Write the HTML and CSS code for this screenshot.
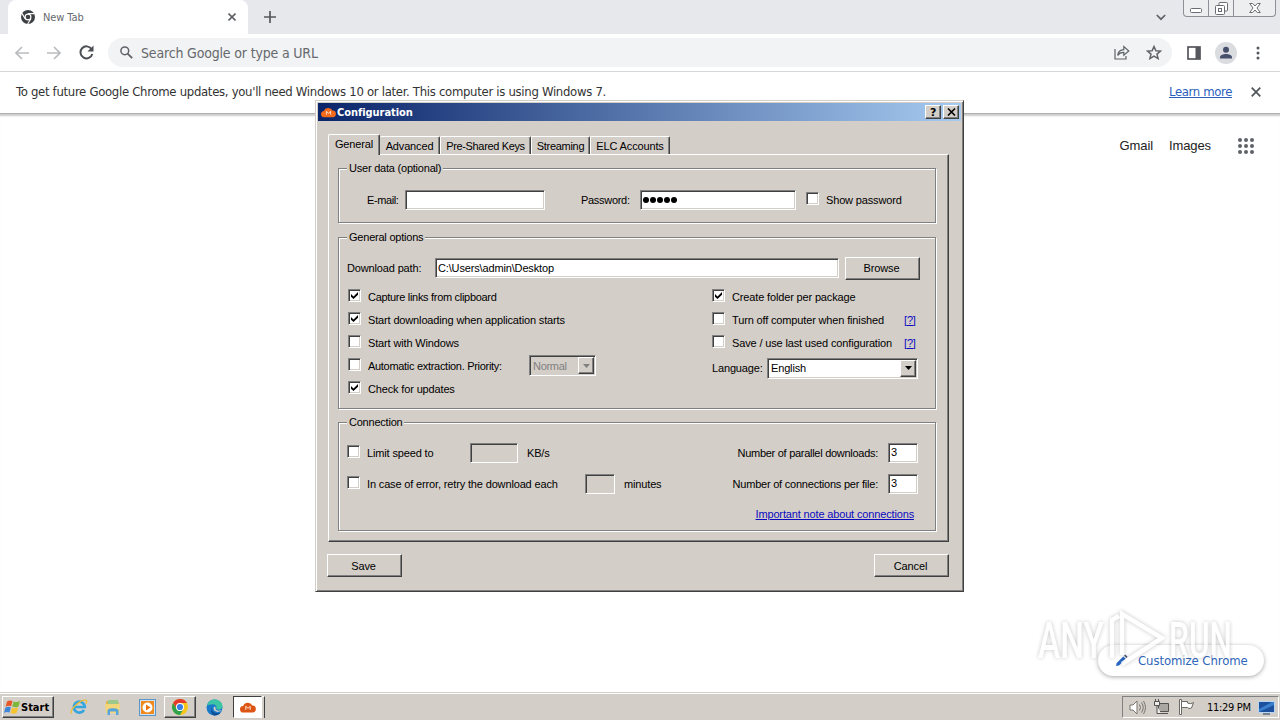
FILE: index.html
```html
<!DOCTYPE html>
<html lang="en">
<head>
    <meta charset="UTF-8">
    <meta name="viewport" content="width=device-width, initial-scale=1.0">
    <title>New Tab</title>
    <link rel="stylesheet" href="styles.css">
</head>
<body>
    <div class="desktop">
        <div class="tabstrip">
            <div class="tab">
                <svg class="tab-icon" width="14" height="14" viewBox="0 0 14 14"><circle cx="7" cy="7" r="7" fill="#3c4043"/><circle cx="7" cy="7" r="2.9" fill="none" stroke="#fff" stroke-width="1.2"/><path d="M7 3.6h6.5M4.1 8.7L1 3.4M9.9 8.7L6.6 14" stroke="#fff" stroke-width="1.1"/></svg>
                <span class="tab-title">New Tab</span>
                <svg width="8" height="8" viewBox="0 0 8 8"><path d="M.5.5l7 7M7.5.5l-7 7" stroke="#5f6368" stroke-width="1.6"/></svg>
            </div>
            <svg class="new-tab" width="12" height="12" viewBox="0 0 12 12"><path d="M6 0v12M0 6h12" stroke="#55585c" stroke-width="1.7"/></svg>
            <svg class="tab-search" width="10" height="7" viewBox="0 0 10 7"><path d="M.8 1L5 5.2 9.2 1" fill="none" stroke="#5f6368" stroke-width="1.7"/></svg>
            <div class="win-controls">
                <span><svg width="12" height="5" viewBox="0 0 12 5"><rect x=".5" y=".5" width="11" height="4" rx="1" fill="#fff" stroke="#6a6d73"/></svg></span>
                <span><svg width="13" height="13" viewBox="0 0 13 13"><g fill="#fff" stroke="#6a6d73"><rect x="4" y=".5" width="8.5" height="8.5" rx="1"/><rect x=".5" y="3.5" width="9" height="9" rx="1"/><rect x="3.5" y="6.5" width="3" height="3"/></g></svg></span>
                <span class="wide"><svg width="12" height="10" viewBox="0 0 12 10"><path d="M.7.5h3L6 3 8.300.5h3L8 5l3.300 4.500h-3L6 7 3.700 9.500h-3L4 5z" fill="#fff" stroke="#6a6d73"/></svg></span>
            </div>
        </div>

        <div class="toolbar">
            <svg width="14" height="14" viewBox="0 0 14 14"><path d="M14 7H1.500M7 1L1 7l6 6" fill="none" stroke="#babcbe" stroke-width="1.700"/></svg>
            <svg class="forward" width="14" height="14" viewBox="0 0 14 14"><path d="M0 7h12.500M7 1l6 6-6 6" fill="none" stroke="#babcbe" stroke-width="1.700"/></svg>
            <svg class="reload" width="15" height="15" viewBox="0 0 15 15"><path d="M12.500 4A6 6 0 1 0 13.300 9" fill="none" stroke="#4c4f53" stroke-width="2"/><path d="M14.500.5v6h-6z" fill="#4c4f53"/></svg>
            <div class="omnibox">
                <svg width="13" height="13" viewBox="0 0 13 13"><circle cx="4.800" cy="4.800" r="3.900" fill="none" stroke="#5f6368" stroke-width="1.500"/><path d="M7.600 7.600l4.600 4.600" stroke="#5f6368" stroke-width="1.800"/></svg>
                <span class="omnibox-text">Search Google or type a URL</span>
                <svg class="share" width="16" height="15" viewBox="0 0 16 15"><path d="M1 4v10h11v-3" fill="none" stroke="#5f6368" stroke-width="1.200"/><path d="M3.700 10.500C4 6.800 6.500 4.800 9.800 4.600V1.500l5 4.500-5 4.300V7.400C7 7.300 5 8.400 3.700 10.500z" fill="none" stroke="#5f6368" stroke-width="1.200"/></svg>
                <svg width="16" height="15" viewBox="0 0 16 15"><path d="M8 1.500l1.900 4.200 4.600.4-3.500 3 1.100 4.500L8 11.200l-4.100 2.400L5 9.100l-3.500-3 4.600-.4z" fill="none" stroke="#5f6368" stroke-width="1.500"/></svg>
            </div>
            <svg class="side-panel" width="14" height="14" viewBox="0 0 14 14"><rect x="1" y="1" width="12" height="12" fill="#fff" stroke="#55575d" stroke-width="1.700"/><path d="M8.500 1H13v12H8.500z" fill="#55575d"/></svg>
            <svg class="avatar" width="22" height="22" viewBox="0 0 22 22"><circle cx="11" cy="11" r="11" fill="#dadce0"/><circle cx="11" cy="7.800" r="3" fill="#46506c"/><path d="M5 16.500v-1.300c0-2.200 3.500-3.200 6-3.200s6 1 6 3.200v1.300z" fill="#46506c"/></svg>
            <svg width="4" height="14" viewBox="0 0 4 14" fill="#55585c"><circle cx="2" cy="2" r="1.500"/><circle cx="2" cy="7" r="1.500"/><circle cx="2" cy="12" r="1.500"/></svg>
        </div>

        <div class="infobar">
            <span class="infobar-text">To get future Google Chrome updates, you'll need Windows 10 or later. This computer is using Windows 7.</span>
            <a class="learn-more">Learn more</a>
            <svg width="10" height="10" viewBox="0 0 10 10"><path d="M.7.7l8.600 8.600M9.300.7L.7 9.300" stroke="#55585c" stroke-width="1.800"/></svg>
        </div>

        <div class="page">
            <div class="page-links">
                <span class="gmail">Gmail</span>
                <span class="images">Images</span>
                <svg width="16" height="16" viewBox="0 0 16 16" fill="#5f6368"><circle cx="2" cy="2" r="2"/><circle cx="8" cy="2" r="2"/><circle cx="14" cy="2" r="2"/><circle cx="2" cy="8" r="2"/><circle cx="8" cy="8" r="2"/><circle cx="14" cy="8" r="2"/><circle cx="2" cy="14" r="2"/><circle cx="8" cy="14" r="2"/><circle cx="14" cy="14" r="2"/></svg>
            </div>
        </div>

        <div class="taskbar">
            <div class="start">
                <svg width="17" height="16" viewBox="0 0 17 16"><path d="M3 2.500C5 1 7 1.200 8.500 2L7.200 7.200C5.500 6.400 3.500 6.500 1.600 7.700z" fill="#e8572a"/><path d="M9.500 2.400c2 .9 4 .9 6.500-.4l-1.500 5.400c-2.300 1.200-4.300 1-6.200.2z" fill="#7db83a"/><path d="M1.300 8.700c2-1.200 4-1.200 5.600-.4l-1.400 5.200c-1.700-.8-3.600-.7-5.500.4z" fill="#3f86d8"/><path d="M8 8.700c2 .8 4 .8 6.200-.2l-1.500 5.300c-2.300 1.200-4.300 1-6.100.1z" fill="#f7c331"/></svg>
                <span>Start</span>
            </div>
            <div class="quick">
                <svg width="18" height="18" viewBox="0 0 18 18"><path d="M14 12a5.500 5.500 0 1 1 .8-3H5" fill="none" stroke="#35a5e0" stroke-width="2.700"/><path d="M1.500 15.500C-1 12 11 .5 16.200 2.300c1 .7.5 2-.4 3.500" fill="none" stroke="#edbd35" stroke-width="1.300"/></svg>
            </div>
            <div class="quick">
                <svg width="18" height="17" viewBox="0 0 18 17"><path d="M2 2h5l1.500 1.500H15V13H2z" fill="#dcb450"/><path d="M4 1h10v5H4z" fill="#9cc98a"/><path d="M1 5h15l-1 9H2z" fill="#f3d67a"/><path d="M3.500 16v-4.500c0-3 11-3 11 0V16H12v-3.500H6V16z" fill="#58a5dc"/></svg>
            </div>
            <div class="quick">
                <svg width="17" height="17" viewBox="0 0 17 17"><rect x=".5" y=".5" width="16" height="16" fill="#cfe4f7" stroke="#5c94cc"/><rect x="2" y="2" width="13" height="13" fill="#f08a1c"/><circle cx="8.500" cy="8.500" r="5" fill="#fff"/><path d="M7 5.500l4.500 3L7 11.500z" fill="#e9720c"/></svg>
            </div>
            <div class="task raised">
                <svg width="16" height="16" viewBox="0 0 16 16"><circle cx="8" cy="8" r="8" fill="#f7c61c"/><path d="M1.070 4A8 8 0 0 1 14.930 4H8a4 4 0 0 0-3.460 6z" fill="#e33b2e"/><path d="M1.070 4A8 8 0 0 0 8 16l3.460-6A4 4 0 0 1 4.540 10z" fill="#2fa24c"/><circle cx="8" cy="8" r="4" fill="#fff"/><circle cx="8" cy="8" r="3.100" fill="#3b7de8"/></svg>
            </div>
            <div class="quick edge">
                <svg width="17" height="17" viewBox="0 0 17 17"><circle cx="8.500" cy="8.500" r="8" fill="#1b79c9"/><path d="M1 7C2 2 6 .5 9 .5c5 0 7.700 4 7.500 7-.2 3-4.500 4-6.500 2.300 1.500-2-.5-4.500-3-4.500C4 5.300 2 6 1 7z" fill="#3cc5a5"/><path d="M5.500 9c0 4 4 6.200 9 4.800-1.500 2-4 3-6.500 2.700C5 15 4.500 11 5.500 9z" fill="#0c4f94"/><path d="M8.300 7.500c1.500.5 1.500 1.600 1.200 2.500.7 2 4 2 6.200 1-1 2-6 2.700-7.700 0-.6-1.300-.5-2.500.3-3.500z" fill="#d4d0c8"/></svg>
            </div>
            <div class="task sunken">
                <svg width="16" height="12" viewBox="0 0 16 12"><path d="M3.500 11.500a3.300 3.300 0 0 1-.4-6.600A5 5 0 0 1 12.300 4.500a3.500 3.500 0 0 1 .2 7z" fill="#dd5514"/><path d="M5.800 8.800V5.300L8 7.300l2.200-2v3.500" fill="none" stroke="#ffe3d0" stroke-width="1"/></svg>
            </div>
            <div class="task-stub"></div>
            <div class="tray">
                <svg width="17" height="15" viewBox="0 0 17 15"><path d="M1 5h3l4-4v13l-4-4H1z" fill="#fff" stroke="#77746f"/><path d="M10.500 4.500q2 3 0 6M12.500 2.500q3.500 5 0 10M14.500 1q4 6.500 0 13" fill="none" stroke="#77746f"/></svg>
                <svg width="17" height="16" viewBox="0 0 17 16"><path d="M5.500 4.500h10v8h-10z" fill="#aaa7a2" stroke="#55534f"/><path d="M7 14.500h8" stroke="#55534f"/><path d="M1.500 2.500h5v4h-5zM2.500 0v2M5.500 0v2M4 6.500v8h4" fill="#eee" stroke="#55534f"/></svg>
                <svg width="17" height="16" viewBox="0 0 17 16"><path d="M1.500.5h2v15h-2z" fill="#fff" stroke="#6b6863"/><path d="M3.500 2.500h6v1.500c2 1 4 .8 6-.5l-2 5.500c-2 .8-3.500.5-4-.5h-6z" fill="#fff" stroke="#6b6863"/></svg>
                <span class="clock">11:29 PM</span>
                <svg width="17" height="15" viewBox="0 0 17 15"><rect x=".5" y="1.500" width="16" height="11" fill="#1c4f9c" stroke="#b9d6f2"/><path d="M1 9L14 2h2v3L1 12z" fill="#3a7fce"/><path d="M5 14h7" stroke="#1b3558"/></svg>
            </div>
        </div>

        <div class="customize">
            <svg width="13" height="13" viewBox="0 0 13 13"><path d="M1 12l.7-3L8.300 2.400l2.400 2.400L4 11.400z" fill="#2867c5"/><path d="M9 1.700L10.300.5l2.300 2.300-1.200 1.300z" fill="#4a5a78"/></svg>
            <span>Customize Chrome</span>
        </div>

        <svg class="watermark" width="230" height="80" viewBox="0 0 230 80">
            <g class="watermark-shape">
                <text x="8" y="53" textLength="66" lengthAdjust="spacingAndGlyphs">ANY</text>
                <text x="139" y="53" textLength="63" lengthAdjust="spacingAndGlyphs">RUN</text>
                <path d="M82 53V15l7-4M92 50V9l40 24-40 26" fill="none" stroke="#fff" stroke-width="4.500"/>
            </g>
        </svg>

        <div class="dialog">
            <div class="titlebar">
                <svg width="15" height="12" viewBox="0 0 16 12"><path d="M3.500 11.500a3.300 3.300 0 0 1-.4-6.600A5 5 0 0 1 12.300 4.500a3.500 3.500 0 0 1 .2 7z" fill="#f26a1b"/><path d="M5.800 8.800V5.300L8 7.300l2.200-2v3.500" fill="none" stroke="#ffe3d0" stroke-width="1"/></svg>
                <span class="title">Configuration</span>
                <span class="title-btn">?</span>
                <span class="title-btn"><svg width="9" height="8" viewBox="0 0 9 8"><path d="M1 .5l7 7M8 .5l-7 7" stroke="#000" stroke-width="1.600"/></svg></span>
            </div>

            <div class="tabs">
                <span class="dlg-tab active">General</span>
                <span class="dlg-tab advanced">Advanced</span>
                <span class="dlg-tab keys">Pre-Shared Keys</span>
                <span class="dlg-tab streaming">Streaming</span>
                <span class="dlg-tab accounts">ELC Accounts</span>
            </div>

            <div class="panel">
                <div class="group user-data">
                    <span class="legend">User data (optional)</span>
                    <div class="user-row">
                        <span class="email-label">E-mail:</span>
                        <span class="field email"></span>
                        <span class="password-label">Password:</span>
                        <span class="field password"><i></i><i></i><i></i><i></i><i></i></span>
                        <span class="check"><span class="box"></span>Show password</span>
                    </div>
                </div>

                <div class="group general">
                    <span class="legend">General options</span>
                    <div class="path-row">
                        <span class="path-label">Download path:</span>
                        <span class="field path">C:\Users\admin\Desktop</span>
                        <span class="button">Browse</span>
                    </div>
                    <div class="columns">
                        <div class="col-left">
                            <div class="check tight"><span class="box"><svg width="7" height="7" viewBox="0 0 7 7"><path d="M0 2l2.500 2.500L7 0v2.700L2.500 7 0 4.700z"/></svg></span>Capture links from clipboard</div>
                            <div class="check"><span class="box"><svg width="7" height="7" viewBox="0 0 7 7"><path d="M0 2l2.500 2.500L7 0v2.700L2.500 7 0 4.700z"/></svg></span>Start downloading when application starts</div>
                            <div class="check"><span class="box"></span>Start with Windows</div>
                            <div class="check tight"><span class="box"></span><span class="extract-label">Automatic extraction. Priority:</span><span class="select disabled">Normal<b><svg width="7" height="4" viewBox="0 0 7 4"><path d="M0 0h7L3.500 4z"/></svg></b></span></div>
                            <div class="check"><span class="box"><svg width="7" height="7" viewBox="0 0 7 7"><path d="M0 2l2.500 2.500L7 0v2.700L2.500 7 0 4.700z"/></svg></span>Check for updates</div>
                        </div>
                        <div class="col-right">
                            <div class="check"><span class="box"><svg width="7" height="7" viewBox="0 0 7 7"><path d="M0 2l2.500 2.500L7 0v2.700L2.500 7 0 4.700z"/></svg></span>Create folder per package</div>
                            <div class="check"><span class="box"></span><span class="help-label">Turn off computer when finished</span><a class="link">[?]</a></div>
                            <div class="check"><span class="box"></span><span class="help-label">Save / use last used configuration</span><a class="link">[?]</a></div>
                            <div class="language-row"><span class="language-label">Language:</span><span class="select">English<b><svg width="7" height="4" viewBox="0 0 7 4"><path d="M0 0h7L3.500 4z"/></svg></b></span></div>
                        </div>
                    </div>
                </div>

                <div class="group connection">
                    <span class="legend">Connection</span>
                    <div class="conn-row">
                        <span class="check limit"><span class="box"></span>Limit speed to</span>
                        <span class="field disabled speed"></span>
                        <span class="unit">KB/s</span>
                        <span class="number-label parallel">Number of parallel downloads:</span>
                        <span class="field number">3</span>
                    </div>
                    <div class="conn-row">
                        <span class="check retry"><span class="box"></span>In case of error, retry the download each</span>
                        <span class="field disabled minutes"></span>
                        <span class="unit">minutes</span>
                        <span class="number-label">Number of connections per file:</span>
                        <span class="field number">3</span>
                    </div>
                    <div class="note-row"><a class="link">Important note about connections</a></div>
                </div>
            </div>

            <div class="actions">
                <span class="button">Save</span>
                <span class="button">Cancel</span>
            </div>
        </div>
    </div>
</body>
</html>
```
FILE: styles.css
```css
* { box-sizing: border-box; }
body { margin: 0; overflow: hidden; font-family: "Liberation Sans", sans-serif; color: #000; }
svg { flex: none; display: block; }
span { white-space: nowrap; }
.desktop { position: relative; width: 1280px; height: 720px; display: flex; flex-direction: column; background: #fff; overflow: hidden; }

/* browser */
.tabstrip { height: 34px; flex: none; display: flex; align-items: center; background: #e6e8eb; padding: 0 4px 0 8px; }
.tab { width: 240px; height: 34px; display: flex; align-items: center; background: #fff; border-radius: 8px 8px 0 0; padding: 0 12px 0 13px; box-shadow: 0 8px 0 #fff; }
.tab-icon { margin-right: 8px; }
.tab-title { flex: 1; font: 11px "DejaVu Sans Condensed", "DejaVu Sans", sans-serif; font-stretch: condensed; letter-spacing: -0.1px; color: #66696d; }
.new-tab { margin-left: 16px; }
.tab-search { margin-left: auto; margin-right: 17px; }
.win-controls { align-self: flex-start; width: 93px; height: 17px; display: flex; border: 1px solid #8d9096; border-top: 0; border-radius: 0 0 4px 4px; background: #eceef0; }
.win-controls span { width: 25px; display: flex; align-items: center; justify-content: center; border-right: 1px solid #8d9096; }
.win-controls span:first-child { padding-top: 4px; }
.win-controls .wide { flex: 1; border-right: 0; }
.toolbar { height: 38px; flex: none; display: flex; align-items: center; padding: 0 20px 0 15px; border-bottom: 1px solid #d5d7da; background: #fff; }
.forward { margin-left: 18px; }
.reload { margin-left: 18px; }
.omnibox { width: 1064px; height: 29px; margin-left: 14px; border-radius: 15px; background: #f1f3f4; display: flex; align-items: center; padding: 0 10px 0 12px; }
.omnibox-text { flex: 1; margin-left: 8px; font: 14px "DejaVu Sans Condensed", "DejaVu Sans", sans-serif; font-stretch: condensed; letter-spacing: -0.17px; color: #66696d; }
.share { margin-right: 16px; }
.side-panel { margin-left: 15px; }
.avatar { margin: 0 auto 0 14px; }
.infobar { height: 41px; flex: none; display: flex; align-items: center; padding: 0 19px 1px 16px; font: 13px "DejaVu Sans Condensed", "DejaVu Sans", sans-serif; font-stretch: condensed; letter-spacing: -0.305px; color: #333; background: #fff; }
.infobar-text { flex: 1; padding-bottom: 2px; }
.learn-more { color: #2a5fc0; text-decoration: underline; margin-right: 19px; padding-bottom: 2px; letter-spacing: -0.36px; }
.page { flex: 1; border-top: 1px solid #b0b0b0; box-shadow: inset 0 3px 2px -1px #ccc; }
.page-links { height: 64px; display: flex; align-items: center; justify-content: flex-end; padding-right: 26px; font-size: 13px; letter-spacing: -0.1px; color: #222; }
.page-links span { padding-bottom: 1px; }
.gmail { margin-right: 16px; }
.images { margin-right: 27px; }

.customize { position: absolute; left: 1098px; top: 645px; width: 166px; height: 31px; border-radius: 16px; background: #fff; box-shadow: 0 1px 4px rgba(0,0,0,.35); display: flex; align-items: center; padding-left: 17px; font: 13px "DejaVu Sans Condensed", "DejaVu Sans", sans-serif; font-stretch: condensed; letter-spacing: -0.08px; color: #2f66ba; }
.customize span { margin-left: 10px; }
.watermark { position: absolute; left: 1030px; top: 605px; }
.watermark-shape { opacity: .65; filter: drop-shadow(0 0 2px rgba(0,0,0,.35)); }
.watermark text { font: 500 50px Roboto, sans-serif; fill: #fff; }

/* taskbar */
.taskbar { height: 28px; flex: none; display: flex; align-items: center; background: #d4cec8; border-top: 1px solid #d4cec8; box-shadow: inset 0 1px 0 #fff; padding: 1px 1px 0 2px; }
.start { width: 52px; height: 22px; display: flex; align-items: center; padding-left: 1px; font: bold 11px "DejaVu Sans Condensed", "DejaVu Sans", sans-serif; font-stretch: condensed; border: 1px solid; border-color: #fff #404040 #404040 #fff; box-shadow: inset -1px -1px 0 #808080; margin-right: 8px; }
.quick { width: 34px; display: flex; justify-content: center; }
.task { width: 32px; height: 22px; display: flex; align-items: center; justify-content: center; border: 1px solid; }
.raised { border-color: #fff #404040 #404040 #fff; box-shadow: inset -1px -1px 0 #808080; }
.sunken { border-color: #404040 #fff #fff #404040; background: #fff; width: 29px; }
.task-stub { width: 3px; height: 22px; border-right: 1px solid #404040; border-top: 1px solid #fff; }
.edge { width: 37px; }
.tray { margin-left: auto; width: 157px; height: 22px; display: flex; align-items: center; justify-content: space-between; padding: 0 3px 0 6px; border: 1px solid; border-color: #808080 #fff #fff #808080; }
.clock { font: 11px "DejaVu Sans Condensed", "DejaVu Sans", sans-serif; font-stretch: condensed; letter-spacing: -0.3px; margin-left: 5px; }

/* dialog */
.dialog { position: absolute; left: 315px; top: 100px; width: 649px; height: 492px; padding: 1px; background: #d4cec8; border: 1px solid; border-color: #d4cec8 #404040 #404040 #d4cec8; box-shadow: inset 1px 1px 0 #fff, inset -1px -1px 0 #808080; font-size: 11px; letter-spacing: -0.15px; }
.titlebar { height: 18px; margin: 1px 1px 0; display: flex; align-items: center; padding: 0 2px 0 3px; background: linear-gradient(90deg, #0a246a, #a6caf0); color: #fff; }
.title { flex: 1; margin-left: 1px; font: bold 11px "DejaVu Sans Condensed", "DejaVu Sans", sans-serif; font-stretch: condensed; letter-spacing: -0.05px; }
.title-btn { width: 16px; height: 14px; margin-left: 2px; display: flex; align-items: center; justify-content: center; background: #d4cec8; color: #000; font: bold 11px "DejaVu Sans", sans-serif; border: 1px solid; border-color: #fff #404040 #404040 #fff; box-shadow: inset -1px -1px 0 #808080; }
.tabs { height: 33px; display: flex; align-items: flex-end; padding-left: 11px; }
.dlg-tab { height: 18px; display: flex; align-items: center; justify-content: center; border: 1px solid; border-color: #fff #404040 transparent #fff; border-radius: 2px 2px 0 0; box-shadow: inset -1px 0 0 #808080; border-bottom: 0; }
.dlg-tab.active { width: 52px; height: 21px; padding-bottom: 3px; margin-bottom: -1px; background: #d4cec8; position: relative; }
.advanced { width: 60px; border-left: 0; }
.keys { width: 91px; letter-spacing: -0.35px; }
.streaming { width: 59px; letter-spacing: -0.3px; }
.accounts { width: 80px; }
.panel { width: 621px; height: 388px; margin-left: 11px; padding: 13px 10px 0 9px; border: 1px solid; border-color: #fff #404040 #404040 #fff; box-shadow: inset -1px -1px 0 #808080; }
.group { border: 1px solid #808080; box-shadow: inset 1px 1px 0 #fff, 1px 1px 0 #fff; width: 598px; }
.legend { display: block; width: max-content; height: 14px; line-height: 13px; margin: -7px 0 0 8px; padding: 0 2px; background: #d4cec8; letter-spacing: -0.22px; }
.user-data { height: 55px; }
.general { height: 172px; margin-top: 14px; }
.connection { height: 109px; margin-top: 13px; }
.field { height: 20px; flex: none; display: flex; align-items: center; padding: 0 0 1px 2px; background: #fff; border: 1px solid; border-color: #808080 #fff #fff #808080; box-shadow: inset 1px 1px 0 #404040, inset -1px -1px 0 #d4cec8; }
.field.disabled { background: #d4cec8; }
.check { display: flex; align-items: center; height: 23px; }
.tight { letter-spacing: -0.3px; }
.box { width: 13px; height: 13px; flex: none; margin: -3px 7px 0 0; background: #fff; border: 1px solid; border-color: #808080 #fff #fff #808080; box-shadow: inset 1px 1px 0 #404040, inset -1px -1px 0 #d4cec8; display: flex; align-items: center; justify-content: center; }
.button { width: 75px; height: 23px; flex: none; display: flex; align-items: center; justify-content: center; padding: 0 2px 0 0; border: 1px solid; border-color: #fff #404040 #404040 #fff; box-shadow: inset -1px -1px 0 #808080; }
.link { color: #0a0ac0; text-decoration: underline; }

.user-row { display: flex; align-items: center; height: 24px; margin-top: 12px; padding-left: 28px; }
.email-label { width: 38px; letter-spacing: -0.4px; }
.email { width: 140px; margin-right: 36px; }
.password-label { width: 59px; letter-spacing: -0.3px; }
.password { width: 156px; margin-right: 10px; gap: 1px; padding-bottom: 0; }
.password i { width: 6px; height: 6px; border-radius: 50%; background: #000; }
.path-row { display: flex; align-items: center; height: 24px; margin-top: 11px; padding-left: 8px; }
.path-label { width: 88px; }
.path { width: 404px; margin-right: 6px; }
.columns { display: flex; margin-top: 5px; padding-left: 9px; }
.col-left { width: 364px; }
.extract-label { width: 161px; }
.help-label { width: 172px; }
.select { width: 151px; height: 21px; display: flex; align-items: center; justify-content: space-between; padding: 0 1px 0 3px; background: #fff; border: 1px solid; border-color: #808080 #fff #fff #808080; box-shadow: inset 1px 1px 0 #404040, inset -1px -1px 0 #d4cec8; }
.select b { width: 16px; height: 17px; display: flex; align-items: center; justify-content: center; background: #d4cec8; border: 1px solid; border-color: #fff #404040 #404040 #fff; box-shadow: inset -1px -1px 0 #808080; }
.select.disabled { width: 67px; color: #808080; background: #d4cec8; fill: #808080; }
.language-row { display: flex; align-items: center; height: 28px; }
.language-label { width: 55px; }
.conn-row { display: flex; align-items: center; height: 31px; padding: 0 17px 0 8px; }
.legend + .conn-row { margin-top: 7px; }
.limit { width: 123px; }
.retry { width: 238px; }
.speed { width: 48px; }
.minutes { width: 30px; }
.unit { margin-left: 9px; }
.number-label { margin-left: auto; margin-right: 10px; letter-spacing: -0.22px; }
.parallel { letter-spacing: -0.28px; }
.number { width: 30px; }
.note-row { display: flex; justify-content: flex-end; align-items: center; height: 30px; padding-right: 21px; }
.actions { display: flex; justify-content: space-between; padding: 12px 13px 0 10px; }
```
